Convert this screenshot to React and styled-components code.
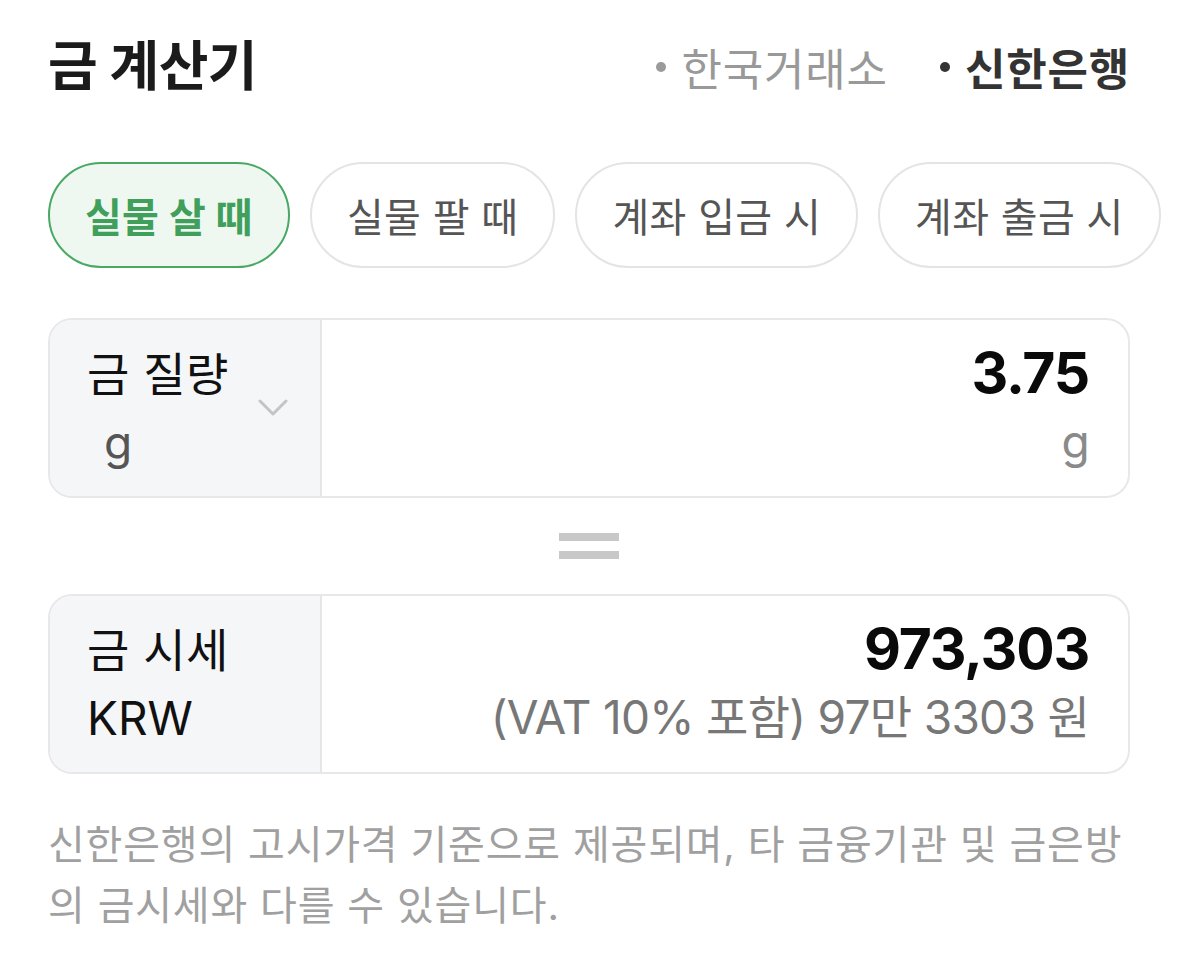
import React from "react";
import styled, { createGlobalStyle } from "styled-components";

const Global = createGlobalStyle`
  html, body { margin: 0; padding: 0; background: #ffffff; }
  body { font-family: Inter, "Noto Sans CJK KR", sans-serif; overflow: hidden; }
  * { box-sizing: border-box; }
`;

const Page = styled.div`
  width: 1179px;
  padding: 28px 49px 0 48px;
  font-family: Inter, "Noto Sans CJK KR", sans-serif;
`;

const Header = styled.div`
  display: flex;
  align-items: center;
  justify-content: space-between;
  height: 78px;
`;

const Title = styled.h1`
  margin: 0;
  font-size: 54px;
  font-weight: 700;
  letter-spacing: -0.5px;
  color: #1b1b1b;
  line-height: 78px;
`;

const Sources = styled.div`
  display: flex;
  align-items: center;
  gap: 52px;
`;

const Source = styled.span`
  display: flex;
  align-items: center;
  gap: 15px;
  font-size: 44px;
  letter-spacing: 0.8px;
  font-weight: ${(p) => (p.$active ? 700 : 400)};
  color: ${(p) => (p.$active ? "#333333" : "#999999")};
  &::before {
    content: "";
    width: 10px;
    height: 10px;
    border-radius: 50%;
    background: ${(p) => (p.$active ? "#333333" : "#9a9a9a")};
  }
`;

const ChipRow = styled.div`
  display: flex;
  gap: 20px;
  margin-top: 56px;
  margin-right: -49px;
  overflow: hidden;
`;

const Chip = styled.div`
  flex: none;
  height: 106px;
  padding: 0 35px;
  display: flex;
  align-items: center;
  border-radius: 53px;
  border: 2px solid ${(p) => (p.$active ? "#4aa865" : "#e4e4e4")};
  background: ${(p) => (p.$active ? "#eef8f1" : "#ffffff")};
  color: ${(p) => (p.$active ? "#3f9f5b" : "#555555")};
  font-size: 40px;
  font-weight: ${(p) => (p.$active ? 700 : 400)};
  letter-spacing: 0.3px;
  white-space: nowrap;
`;

const Box = styled.div`
  display: flex;
  height: 180px;
  border: 2px solid #e8e8ea;
  border-radius: 24px;
  overflow: hidden;
  margin-top: ${(p) => p.$mt || 0}px;
`;

const Side = styled.div`
  flex: none;
  width: 272px;
  background: #f5f6f8;
  border-right: 2px solid #e6e6e8;
  display: flex;
  align-items: center;
  justify-content: space-between;
  padding: 0 32px 0 37px;
`;

const SideText = styled.div`
  display: flex;
  flex-direction: column;
`;

const SideLabel = styled.div`
  font-size: 46px;
  line-height: 68px;
  letter-spacing: 0.5px;
  color: #111111;
`;

const SideUnit = styled.div`
  font-size: 46px;
  line-height: 68px;
  color: ${(p) => p.$color || "#111111"};
  padding-left: ${(p) => p.$indent || 0}px;
  letter-spacing: 0px;
`;

const Main = styled.div`
  flex: 1;
  display: flex;
  flex-direction: column;
  align-items: flex-end;
  justify-content: center;
  padding: 0 39px 0 20px;
`;

const Value = styled.div`
  font-size: 57px;
  font-weight: 700;
  line-height: 66px;
  color: #0a0a0a;
  letter-spacing: -1.2px;
`;

const Sub = styled.div`
  font-size: ${(p) => p.$size || 46}px;
  line-height: 70px;
  color: ${(p) => p.$color || "#777777"};
  letter-spacing: -0.7px;
`;

const Equals = styled.div`
  height: 96px;
  display: flex;
  align-items: center;
  justify-content: center;
`;

const EqIcon = styled.div`
  width: 60px;
  display: flex;
  flex-direction: column;
  gap: 10px;
  &::before,
  &::after {
    content: "";
    height: 8px;
    background: #c8c8c8;
  }
`;

const Note = styled.p`
  margin: 40px 0 0;
  font-size: 40px;
  line-height: 61px;
  color: #a0a0a0;
  letter-spacing: 0.8px;
`;

const Chevron = () => (
  <svg width="30" height="18" viewBox="0 0 30 18" fill="none">
    <path d="M2 2 L15 15 L28 2" stroke="#c4c4c4" strokeWidth="3" strokeLinecap="round" strokeLinejoin="round" />
  </svg>
);

const chips = ["실물 살 때", "실물 팔 때", "계좌 입금 시", "계좌 출금 시", "계좌 잔고"];

export default function App() {
  return (
    <>
      <Global />
      <Page>
        <Header>
          <Title>금 계산기</Title>
          <Sources>
            <Source>한국거래소</Source>
            <Source $active>신한은행</Source>
          </Sources>
        </Header>
        <ChipRow>
          {chips.map((c, i) => (
            <Chip key={c} $active={i === 0}>{c}</Chip>
          ))}
        </ChipRow>
        <Box $mt={50}>
          <Side>
            <SideText>
              <SideLabel>금 질량</SideLabel>
              <SideUnit $color="#555555" $indent={17}>g</SideUnit>
            </SideText>
            <Chevron />
          </Side>
          <Main>
            <Value>3.75</Value>
            <Sub $color="#8a8a8a">g</Sub>
          </Main>
        </Box>
        <Equals>
          <EqIcon />
        </Equals>
        <Box>
          <Side>
            <SideText>
              <SideLabel>금 시세</SideLabel>
              <SideUnit>KRW</SideUnit>
            </SideText>
          </Side>
          <Main>
            <Value>973,303</Value>
            <Sub>(VAT 10% 포함) 97만 3303 원</Sub>
          </Main>
        </Box>
        <Note>
          신한은행의 고시가격 기준으로 제공되며, 타 금융기관 및 금은방
          <br />
          의 금시세와 다를 수 있습니다.
        </Note>
      </Page>
    </>
  );
}
